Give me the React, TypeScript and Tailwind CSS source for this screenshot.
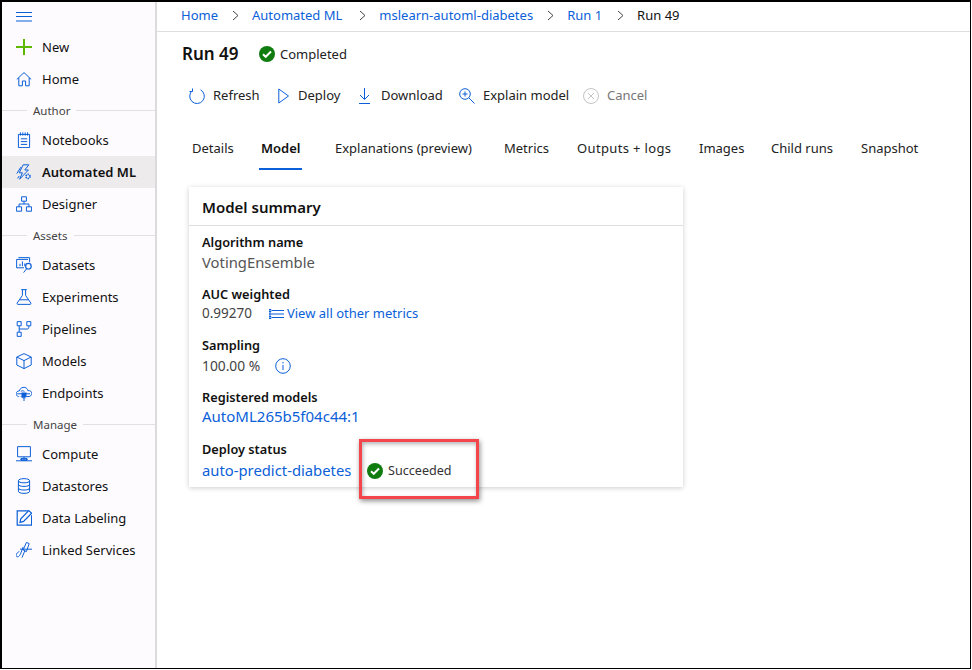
import React from "react";

const B = "#0b5fd8";
const S = ({ children, w = 16, h = 16, vb = "0 0 20 20" }: { children: React.ReactNode; w?: number; h?: number; vb?: string }) => (
  <svg width={w} height={h} viewBox={vb} fill="none" stroke={B} strokeWidth={1.25} className="shrink-0">{children}</svg>
);

const icons: Record<string, React.ReactNode> = {
  New: <S><path d="M10 0V20M0 10H20" stroke="#5cb800" strokeWidth={2.5} /></S>,
  Home: <S><path d="M1 10.500 10 2l9 8.500M3.500 8.500V18.500h4.500v-6h4v6h4.500V8.500" /></S>,
  Notebooks: <S><path d="M3 3h14v16.500H3zM5.500 .5v4M8.500 .5v4M11.500 .5v4M14.500 .5v4M6 8.500h8M6 12h8M6 15.500h8" /></S>,
  "Automated ML": <S><path d="M9 1h7L11 7.500h4.500L4.500 19l3.500-8H4zM1 12l5-8M2 18l2-3" /><circle cx="15" cy="15.500" r="2.500" strokeWidth={2} strokeDasharray="1.500 1" /></S>,
  Designer: <S><path d="M7 1h6v5.500H7zM.5 13.500h6.500V19H.5zM13 13.500h6.500V19H13zM10 6.500V10M3.800 13.500V10H16.200v3.500" /></S>,
  Datasets: <S><path d="M3 .8H17V6.500M.8 3H15M.8 3V13.500H10M5 11.500V8.500M8 11.500V5.500M11 11.500V8M9.500 19.500l3.500-4.500" /><circle cx="15.500" cy="11.500" r="3.500" strokeWidth={1.500} /></S>,
  Experiments: <S><path d="M6.500 .8h7M8 .8V8L1.500 17.500c-.5 1 0 1.700 1 1.700h15c1 0 1.500-.7 1-1.700L12 8V.8M4.500 13.500h11" /></S>,
  Pipelines: <S><path d="M1.500 .8h5V6h-5zM13.500 .8h5V6h-5zM1.500 14h5v5.200h-5zM4 6V14M16 6v2c0 1.200-.6 2-2 2H4" /></S>,
  Models: <S><path d="M10 .8 19 5v10L10 19.500 1 15V5zM1 5l9 4.500L19 5M10 9.500v10" /></S>,
  Endpoints: <S vb="0 0 20 20"><path d="M4 14.500H3C1 14 0 12 .3 10.500.6 8.500 2 7.500 4 7.500 5 4 8 2.500 11 3c2 .4 3.500 2 3.800 4 2.500-.3 5 1 5 3.500 0 2.500-2 4-4.800 4H13" /><path d="M1.500 11h16M6 8c1.500-1 3-1 4.500 0M6 14l2 2h4M10 15v5" /><rect x="7.500" y="10" width="5" height="4.500" fill={B} /></S>,
  Compute: <S><path d="M2 .8h16V13.500H2zM10 13.500v3M5 16.500h10M0 18.500h20" /><rect x="7" y="15.500" width="6" height="2.500" /></S>,
  Datastores: <S><path d="M3 3.500C3 1.800 6 .8 10 .8s7 1 7 2.700v13c0 1.800-3 2.700-7 2.700s-7-.9-7-2.700zM3 3.500C3 5.200 6 6 10 6s7-.8 7-2.500M3 8C3 9.700 6 10.500 10 10.500s7-.8 7-2.500M3 12.500c0 1.700 3 2.500 7 2.500s7-.8 7-2.500" /></S>,
  "Data Labeling": <S><path d="M15 1H1.500v18h18V6.500" strokeWidth={1.500} /><path d="M5 15.500 6 11 16 .8l3.500 3.200-10 10.200z" strokeWidth={1.500} /></S>,
  "Linked Services": <S><path d="M9 6 6 14c-.8 2-2 4.500-4 4.500C.3 18.500-.5 16.500.5 15L4 11.500M13 .5 9 10l4 2 3.500-10zM11 11l-3.500 8.500M5 9h15" /></S>,
};

const Nav = ({ label, active }: { label: string; active?: boolean }) => (
  <div className={`flex h-8 items-center pl-[14px] ${active ? "bg-[#edebec] font-semibold" : ""}`}>
    {icons[label]}
    <span className="ml-[10px] translate-y-px text-[13px] text-[#111]">{label}</span>
  </div>
);

const Sec = ({ label }: { label: string }) => (
  <div className="flex h-[29px] items-center pt-[2px]">
    <div className="h-px w-[25px] bg-[#e2e0e2]" />
    <span className="px-[6px] text-[11.500px] text-[#444]">{label}</span>
    <div className="h-px flex-1 bg-[#e2e0e2]" />
  </div>
);

const Crumb = ({ children, cls }: { children: React.ReactNode; cls: string }) => (
  <span className={`text-[13px] text-[#0b5fd8] ${cls}`}>{children}</span>
);
const Chev = ({ cls }: { cls: string }) => (
  <svg width="7" height="11" viewBox="0 0 7 11" fill="none" stroke="#444" className={cls}><path d="M1 1l5 4.500-5 4.500" /></svg>
);

const Check = () => (
  <svg width="16" height="16" viewBox="0 0 16 16" className="shrink-0">
    <circle cx="8" cy="8" r="8" fill="#107c10" />
    <path d="M4 8.300l2.700 2.500L12 5.500" fill="none" stroke="#fff" strokeWidth={2} />
  </svg>
);

const Tool = ({ icon, label, cls, muted }: { icon: React.ReactNode; label: string; cls: string; muted?: boolean }) => (
  <div className={`flex items-center ${cls}`}>
    {icon}
    <span className={`text-[13px] ${muted ? "text-[#777]" : "text-[#222]"}`}>{label}</span>
  </div>
);

const Field = ({ label, children, cls, vcls }: { label: string; children: React.ReactNode; cls?: string; vcls?: string }) => (
  <div className={cls}>
    <div className="h-[20px] text-[12.750px] leading-[20px] font-semibold text-[#111]">{label}</div>
    <div className={`flex h-[21px] items-center leading-[21px] ${vcls ?? ""}`}>{children}</div>
  </div>
);

export default function App() {
  return (
    <div className="flex h-[669px] w-[971px] overflow-hidden border-t-[2px] border-r-[1px] border-b-[1px] border-l-[2px] border-black bg-white font-['Noto_Sans','Open_Sans',sans-serif]">
      <aside className="w-[155px] shrink-0 border-r-[2px] border-[#dcdadc] bg-[#fefbfe]">
        <div className="flex h-[29px] items-center pl-[14px]">
          <svg width="16" height="10" viewBox="0 0 16 10" stroke={B}><path d="M0 .5h16M0 4.500h16M0 9h16" /></svg>
        </div>
        <Nav label="New" />
        <Nav label="Home" />
        <Sec label="Author" />
        <Nav label="Notebooks" />
        <Nav label="Automated ML" active />
        <Nav label="Designer" />
        <Sec label="Assets" />
        <Nav label="Datasets" />
        <Nav label="Experiments" />
        <Nav label="Pipelines" />
        <Nav label="Models" />
        <Nav label="Endpoints" />
        <Sec label="Manage" />
        <Nav label="Compute" />
        <Nav label="Datastores" />
        <Nav label="Data Labeling" />
        <Nav label="Linked Services" />
      </aside>

      <main className="relative flex-1">
        <div className="flex h-[30px] items-center border-b border-[#dedede] pb-[2px] pl-[24px]">
          <Crumb cls="">Home</Crumb>
          <Chev cls="ml-[14px]" />
          <Crumb cls="ml-[13px]">Automated ML</Crumb>
          <Chev cls="ml-[17px]" />
          <Crumb cls="ml-[13px]">mslearn-automl-diabetes</Crumb>
          <Chev cls="ml-[14px]" />
          <Crumb cls="ml-[13px]">Run 1</Crumb>
          <Chev cls="ml-[15px]" />
          <span className="ml-[13px] text-[13px] text-[#111]">Run 49</span>
        </div>

        <div className="flex h-[44px] items-center pl-[25px]">
          <span className="w-[77px] text-[17px] font-semibold text-[#111]">Run 49</span>
          <Check />
          <span className="ml-[5px] translate-y-px text-[13px] text-[#222]">Completed</span>
        </div>

        <div className="mt-[2px] flex h-[36px] items-center pl-[32px]">
          <Tool cls="w-[89px]" label="Refresh" icon={<span className="mr-[8px]"><S vb="0 0 16 16"><path d="M3.500 2.500A7.300 7.300 0 1 0 11.500 1.800M3.500 .5V3.500H.5" strokeWidth={1} /></S></span>} />
          <Tool cls="w-[81px]" label="Deploy" icon={<span className="mr-[9px]"><S w={11} vb="0 0 11 16"><path d="M.8 1v14L10.500 8z" strokeWidth={1} /></S></span>} />
          <Tool cls="w-[100px]" label="Download" icon={<span className="mr-[11px]"><S w={11} vb="0 0 11 16"><path d="M5.500 0v11M1 7l4.500 4.500L10 7M0 15.500h11" strokeWidth={1} /></S></span>} />
          <Tool cls="w-[124px]" label="Explain model" icon={<span className="mr-[8px]"><S vb="0 0 16 16"><circle cx="6" cy="6" r="5.300" strokeWidth={1} /><path d="M6 3.500v5M3.500 6h5M9.800 9.800 15.500 15.500" strokeWidth={1} /></S></span>} />
          <Tool cls="" label="Cancel" muted icon={<span className="mr-[8px]"><svg width="16" height="16" viewBox="0 0 16 16" fill="none" stroke="#c8c6c4" className="block"><circle cx="8" cy="8" r="7.500" /><path d="M5 5l6 6M11 5l-6 6" /></svg></span>} />
        </div>

        <div className="mt-[17px] flex h-[40px] pl-[35px] text-[13px] text-[#222]">
          <span className="w-[41px] pt-[8px]">Details</span>
          <div className="ml-[26px] h-[39px] w-[43px] border-b-[2px] border-[#0b5fd8] pt-[8px] pl-[2px] font-semibold text-[#111]">Model</div>
          <span className="ml-[33px] w-[135px] pt-[8px] whitespace-nowrap">Explanations (preview)</span>
          <span className="ml-[34px] w-[45px] pt-[8px]">Metrics</span>
          <span className="ml-[28px] w-[94px] pt-[8px] tracking-[0.35px] whitespace-nowrap">Outputs + logs</span>
          <span className="ml-[28px] w-[44px] pt-[8px]">Images</span>
          <span className="ml-[28px] w-[62px] pt-[8px] whitespace-nowrap">Child runs</span>
          <span className="ml-[28px] pt-[8px]">Snapshot</span>
        </div>

        <section className="mt-[16px] ml-[32px] h-[300px] w-[494px] bg-white shadow-[0_1px_5px_rgba(0,0,0,0.2)]">
          <div className="flex h-[39px] items-center border-b border-[#dedede] pt-[3px] pl-[13px] text-[15px] font-semibold text-[#111]">Model summary</div>
          <div className="pt-[6px] pl-[13px]">
            <Field label="Algorithm name"><span className="text-[14.800px] text-[#555]">VotingEnsemble</span></Field>
            <Field label="AUC weighted" cls="mt-[11px]" vcls="-translate-y-px">
              <span className="text-[13.500px] text-[#444]">0.99270</span>
              <svg width="15" height="10" viewBox="0 0 15 10" fill="none" stroke={B} className="mr-[3px] ml-[17px]"><path d="M3 1.500h12M3 5h12M3 8.500h12M0 .5h2v2H0zM0 4h2v2H0zM0 7.500h2v2H0z" /></svg>
              <span className="text-[13px] text-[#0b5fd8]">View all other metrics</span>
            </Field>
            <Field label="Sampling" cls="mt-[10px]">
              <span className="text-[13.800px] text-[#444]">100.00 %</span>
              <svg width="16" height="16" viewBox="0 0 16 16" fill="none" stroke={B} className="ml-[15px]"><circle cx="8" cy="8" r="7.300" /><path d="M8 7v5M8 4v1.500" /></svg>
            </Field>
            <Field label="Registered models" cls="mt-[11px]" vcls="-translate-y-px"><span className="text-[15px] text-[#0b5fd8]">AutoML265b5f04c44:1</span></Field>
            <Field label="Deploy status" cls="mt-[11px]" vcls="translate-y-px">
              <span className="w-[165px] text-[14.800px] whitespace-nowrap text-[#0b5fd8]">auto-predict-diabetes</span>
              <Check />
              <span className="ml-[5px] text-[12.600px] text-[#333]">Succeeded</span>
            </Field>
          </div>
        </section>

        <div className="absolute top-[437px] left-[202px] h-[60px] w-[120px] border-[3px] border-[#f4444c] shadow-[1px_2px_5px_rgba(0,0,0,0.45),inset_1px_2px_4px_rgba(0,0,0,0.3)]" />
      </main>
    </div>
  );
}
